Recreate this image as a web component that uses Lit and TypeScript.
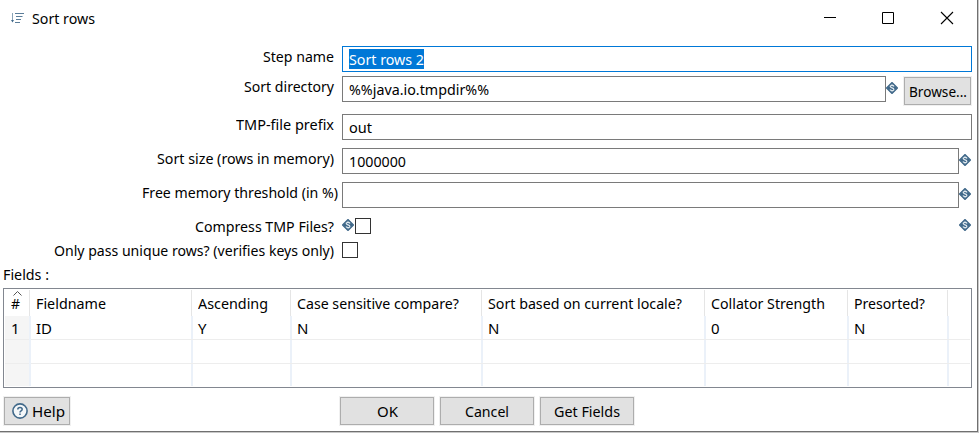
import { LitElement, html, css, nothing } from "lit";
import { customElement, property } from "lit/decorators.js";

/** One line of interface text, condensed so that it fills a given width. */
@customElement("ui-text")
class UiText extends LitElement {
  @property() text = "";
  @property({ type: Number }) w = 0;
  static styles = css`
    :host { display: inline-block; white-space: pre; height: 20px; }
    span { display: inline-block; line-height: 20px; vertical-align: top; transform-origin: 0 0; }
  `;
  render() {
    return html`<span>${this.text}</span>`;
  }
  updated() {
    if (!this.w) return;
    const s = this.renderRoot.querySelector("span") as HTMLElement;
    s.style.transform = "none";
    const natural = s.getBoundingClientRect().width;
    this.style.width = `${this.w}px`;
    s.style.transform = `scaleX(${this.w / natural})`;
  }
}

/** Diamond that marks a field accepting variables. */
@customElement("var-mark")
class VarMark extends LitElement {
  static styles = css`
    :host { display: block; width: 12px; height: 12px; flex: none; }
    svg { display: block; }
  `;
  render() {
    return html`<svg width="12" height="12" viewBox="0 0 12 12">
      <path d="M6 0.5 L11.5 6 L6 11.5 L0.5 6Z" fill="#41698a" stroke="#41698a" stroke-width="1.1" stroke-linejoin="round" />
      <path d="M8 4.5 C7.5 3.1 4.2 3 4.2 4.6 C4.2 6.2 7.9 5.6 7.9 7.4 C7.9 9 4.5 8.9 4 7.5 M6 2.3V3.4 M6 8.6V9.8" fill="none" stroke="#dfe8ee" stroke-width="1.2" />
    </svg>`;
  }
}

type Row = {
  label: string; lw: number; h: number; value?: string; vw?: number;
  kind?: "focus" | "check"; mark?: boolean; browse?: boolean; wide?: boolean;
};

const ROWS: Row[] = [
  { label: "Step name", lw: 71, h: 30, value: "Sort rows 2", vw: 75, kind: "focus" },
  { label: "Sort directory", lw: 90, h: 38, value: "%%java.io.tmpdir%%", vw: 140, mark: true, browse: true },
  { label: "TMP-file prefix", lw: 98, h: 34, value: "out", vw: 23 },
  { label: "Sort size (rows in memory)", lw: 177, h: 34, value: "1000000", vw: 57, mark: true },
  { label: "Free memory threshold (in %)", lw: 196, h: 34, value: "", mark: true, wide: true },
  { label: "Compress TMP Files?", lw: 139, h: 24, kind: "check", mark: true },
  { label: "Only pass unique rows? (verifies keys only)", lw: 280, h: 24, kind: "check" },
];

const COLS = [
  { t: "#", w: 9, v: "1" },
  { t: "Fieldname", w: 70, v: "ID" },
  { t: "Ascending", w: 70, v: "Y" },
  { t: "Case sensitive compare?", w: 162, v: "N" },
  { t: "Sort based on current locale?", w: 194, v: "N" },
  { t: "Collator Strength", w: 114, v: "0" },
  { t: "Presorted?", w: 71, v: "N" },
  { t: "", w: 0, v: "" },
];

@customElement("app-root")
class AppRoot extends LitElement {
  static styles = css`
    * { box-sizing: border-box; }
    :host {
      display: block; width: 979px; height: 433px; overflow: hidden; box-sizing: border-box;
      background: #fff; color: #000; font: 15px/20px "Noto Sans", "Open Sans", sans-serif;
      border-right: 1px solid #c8c8c8; border-bottom: 1px solid #c8c8c8;
    }
    .window { width: 978px; height: 432px; border-right: 1px solid #707070; border-bottom: 1px solid #707070; }
    .title { height: 46px; display: flex; padding: 8px 23px 0 11px; }
    .title .sort { margin: 4px 8px 0 0; }
    .title .name { flex: 1; }
    .controls { display: flex; gap: 45px; padding-top: 3px; }
    .controls .min { margin-right: -1px; }
    svg { display: block; flex: none; }
    .row { display: flex; align-items: flex-start; }
    .label { width: 342px; padding-right: 8px; display: flex; justify-content: flex-end; }
    .label.wide { padding-right: 4px; }
    .input { flex: 1; height: 26px; border: 1px solid #7a7a7a; padding: 2px 6px; }
    .row .field { display: flex; width: 630px; }
    .input.focus { border-color: #0078d7; }
    .focus ui-text { background: #0078d7; color: #fff; }
    .field.short .input { flex: none; width: 544px; }
    .input + var-mark { margin-top: 6px; }
    .field.marked { width: 629px; }
    .field.check { padding-top: 2px; }
    .field.check var-mark { margin-top: 1px; }
    .push { flex: 1; }
    .box { width: 16px; height: 16px; border: 1px solid #333; margin-left: 1px; }
    .box.first { margin-left: 0; }
    .btn {
      display: flex; align-items: flex-start; justify-content: center; height: 28px; padding-top: 3px;
      background: #e1e1e1; border: 1px solid #adadad; box-shadow: 0 0 0 1px #f0f0f0;
    }
    .browse { width: 67px; margin: 1px 0 0 6px; }
    .fields { height: 24px; padding-left: 3px; }
    .table {
      margin-left: 3px; width: 969px; height: 100px; border: 1px solid #828790; padding: 1px;
      display: grid; grid-template-columns: 24px 162px 99px 191px 223px 143px 100px 1fr;
      grid-template-rows: 26px 24px 24px 22px;
    }
    .th { border-right: 1px solid #e5e5e5; margin-right: -1px; padding: 3px 0 0 7px; }
    .th.last, .td.last { border-right: 0; margin-right: 0; }
    .td { border-right: 2px solid #ebf1f9; margin-right: -2px; padding: 2px 0 0 7px; background: linear-gradient(#ededed, #ededed) 0 100% / 100% 1px no-repeat; }
    .td.end { background-size: 0 0; }
    .td.num { background-color: #f5f5f5; }
    .num { position: relative; padding-left: 6px; }
    .arrow { position: absolute; left: 7px; top: 0; }
    .footer { display: flex; padding: 9px 0 0 4px; }
    .help { width: 66px; justify-content: flex-start; padding-left: 7px; gap: 4px; margin-right: 270px; }
    .help svg { margin-top: 2px; }
    .action { width: 94px; margin-right: 6px; }
  `;

  private row(r: Row) {
    const check = r.kind === "check";
    return html`<div class="row" style="height:${r.h}px">
      <div class="label ${r.wide ? "wide" : ""}"><ui-text .text=${r.label} .w=${r.lw}></ui-text></div>
      ${check
        ? html`<div class="field check ${r.mark ? "marked" : ""}">
            ${r.mark ? html`<var-mark></var-mark>` : nothing}
            <div class="box ${r.mark ? "" : "first"}"></div>
            <div class="push"></div>
            ${r.mark ? html`<var-mark></var-mark>` : nothing}
          </div>`
        : html`<div class="field ${r.browse ? "short" : ""} ${r.mark ? "marked" : ""}">
            <div class="input ${r.kind ?? ""}">${r.value ? html`<ui-text .text=${r.value} .w=${r.vw}></ui-text>` : nothing}</div>
            ${r.mark ? html`<var-mark></var-mark>` : nothing}
            ${r.browse ? html`<div class="btn browse"><ui-text text="Browse..." .w=${58}></ui-text></div>` : nothing}
          </div>`}
    </div>`;
  }

  private cells(y: number) {
    return COLS.map((c, i) => {
      const cls = `${i === 0 ? "num" : ""} ${i === COLS.length - 1 ? "last" : ""}`;
      if (y === 0)
        return html`<div class="th ${cls}">
          ${i === 0 ? html`<svg class="arrow" width="11" height="7" viewBox="0 0 11 7"><path d="M1.5 5.5 L5.5 1.5 L9.5 5.5" fill="none" stroke="#555" /></svg>` : nothing}
          <ui-text .text=${c.t} .w=${c.w}></ui-text></div>`;
      return html`<div class="td ${cls} ${y === 3 ? "end" : ""}">${y === 1 ? html`<ui-text .text=${c.v}></ui-text>` : nothing}</div>`;
    });
  }

  render() {
    return html`<div class="window">
      <div class="title">
        <svg class="sort" width="13" height="12" viewBox="0 0 13 12" fill="none" stroke="#5b7d99">
          <path d="M1.5 1V9" stroke="#8aa3b7" /><path d="M0 8H3L1.5 10.5Z" fill="#41698a" stroke="none" />
          <path d="M4 1.5H13M5 4.5H11.5M5 7.5H10M4 10.5H9" />
        </svg>
        <div class="name"><ui-text text="Sort rows" .w=${63}></ui-text></div>
        <div class="controls">
          <svg class="min" width="14" height="14" viewBox="0 0 14 14"><path d="M1 6.5H13" stroke="#000" /></svg>
          <svg width="14" height="14" viewBox="0 0 14 14"><path d="M1.5 1.5H12.5V12.5H1.5Z" fill="none" stroke="#000" /></svg>
          <svg width="14" height="14" viewBox="0 0 14 14"><path d="M1 1L13 13M13 1L1 13" stroke="#000" stroke-width="1.1" /></svg>
        </div>
      </div>
      ${ROWS.map((r) => this.row(r))}
      <div class="fields"><ui-text text="Fields :" .w=${46}></ui-text></div>
      <div class="table">${[0, 1, 2, 3].map((y) => this.cells(y))}</div>
      <div class="footer">
        <div class="btn help">
          <svg width="16" height="16" viewBox="0 0 16 16" fill="none" stroke="#41698a">
            <circle cx="8" cy="8" r="7.1" stroke-width="1.6" fill="#f4f7f9" />
            <path d="M5.8 6.4C5.8 3.7 10.2 3.8 10.2 6.3C10.2 8 8 7.8 8 9.5M8 10.5V12" stroke-width="1.5" />
          </svg>
          <ui-text text="Help" .w=${33}></ui-text>
        </div>
        <div class="btn action"><ui-text text="OK" .w=${21}></ui-text></div>
        <div class="btn action"><ui-text text="Cancel" .w=${44}></ui-text></div>
        <div class="btn action"><ui-text text="Get Fields" .w=${66}></ui-text></div>
      </div>
    </div>`;
  }
}
